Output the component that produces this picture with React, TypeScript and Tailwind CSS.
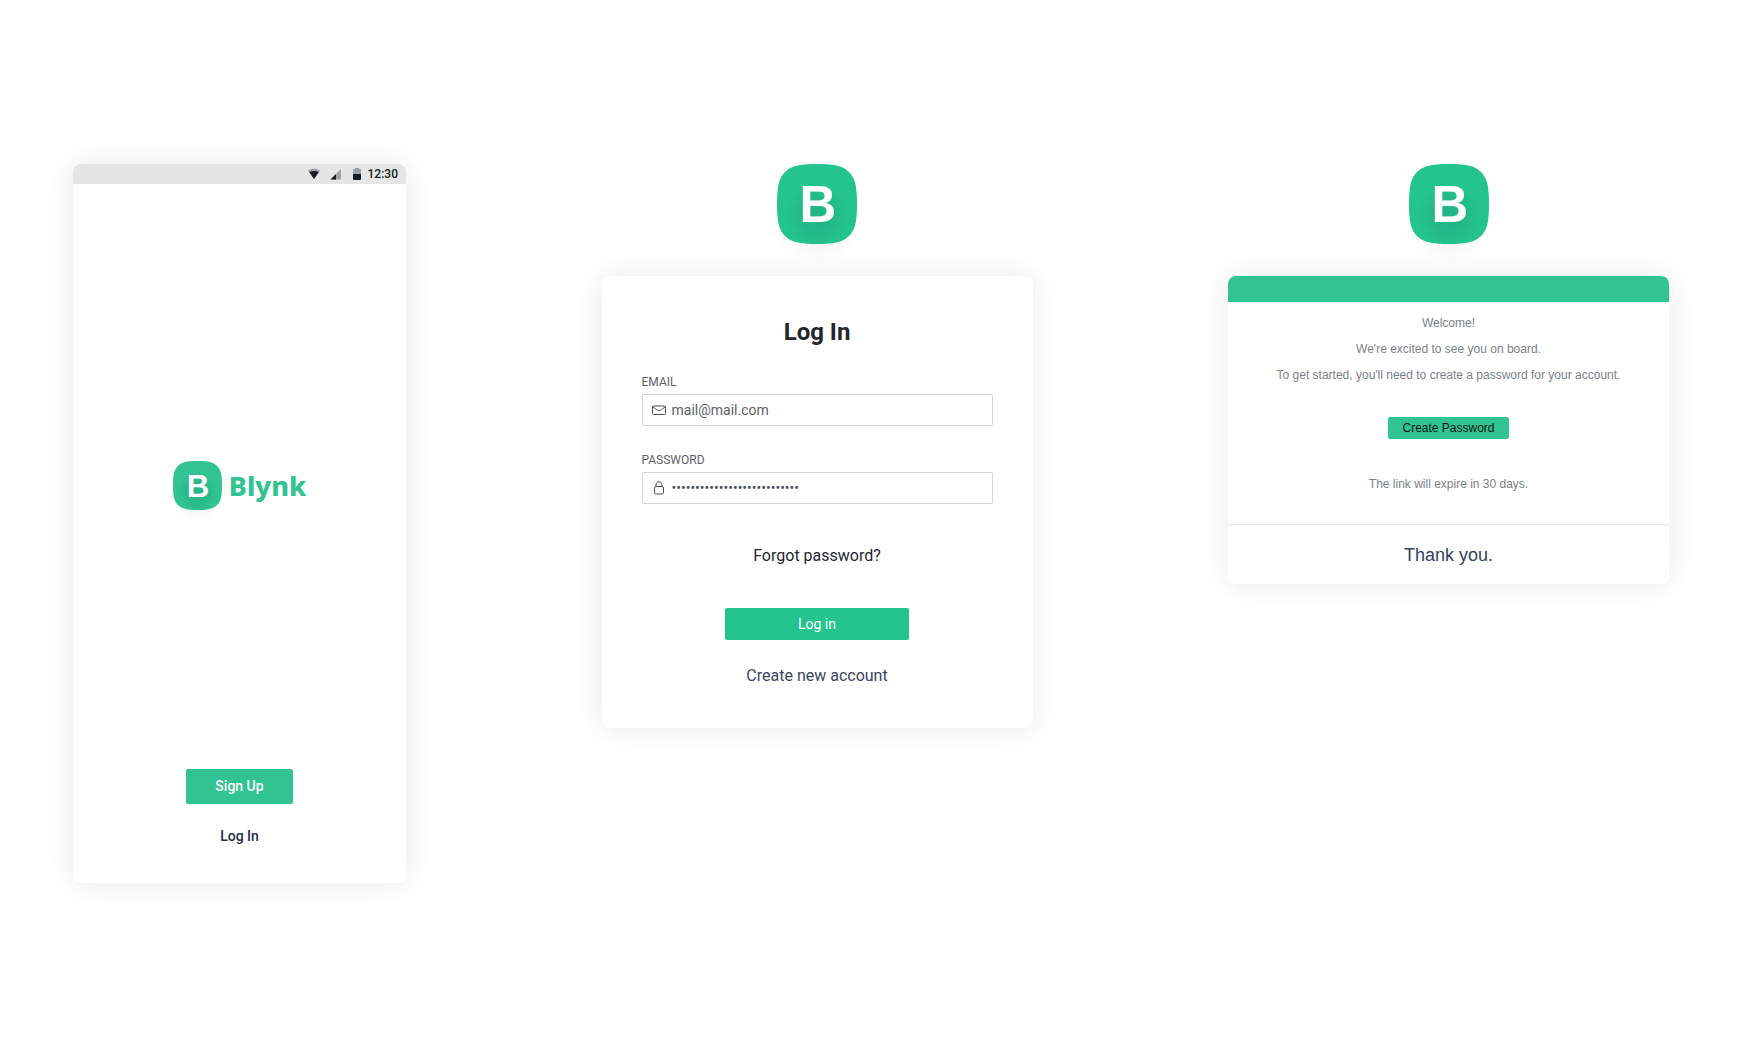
import React, { useState } from "react";

const CARD_SHADOW = "shadow-[0_0_30px_rgba(0,0,0,0.09)]";

function LogoMark({ id, className, fill, title }: { id: string; className: string; fill: string; title: string }) {
  return (
    <svg viewBox="0 0 80 80" role="img" aria-label={title} className={`${className} overflow-visible`}>
      <defs>
        <radialGradient id={id} cx="40" cy="52" r="32" gradientUnits="userSpaceOnUse">
          <stop offset="0" stopColor="#22b083" stopOpacity="0.75" />
          <stop offset="0.5" stopColor="#22b083" stopOpacity="0.55" />
          <stop offset="1" stopColor="#22b083" stopOpacity="0" />
        </radialGradient>
        <radialGradient id={`${id}-drop`}>
          <stop offset="0.4" stopColor="#000" stopOpacity="0.03" />
          <stop offset="1" stopColor="#000" stopOpacity="0" />
        </radialGradient>
      </defs>
      <ellipse cx="40" cy="74" rx="40" ry="24" fill={`url(#${id}-drop)`} />
      <path
        d="M40 0C58 0 66 2 72 8C78 14 80 22 80 40C80 58 78 66 72 72C66 78 58 80 40 80C22 80 14 78 8 72C2 66 0 58 0 40C0 22 2 14 8 8C14 2 22 0 40 0Z"
        fill={fill}
      />
      <path
        d="M40 0C58 0 66 2 72 8C78 14 80 22 80 40C80 58 78 66 72 72C66 78 58 80 40 80C22 80 14 78 8 72C2 66 0 58 0 40C0 22 2 14 8 8C14 2 22 0 40 0Z"
        fill={`url(#${id})`}
      />
      <text x="41" y="58" textAnchor="middle" fill="#fff" fontSize="51" fontWeight="700" fontFamily="'Liberation Sans', Arial, sans-serif">
        B
      </text>
    </svg>
  );
}

function StatusBar() {
  return (
    <div className="flex h-5 items-center justify-end rounded-t-lg bg-[#e5e5e5] pr-2 text-[#151c22]">
      <svg viewBox="0 0 12 12" className="mr-[10px] size-3" aria-hidden="true">
        <path d="M0 2.500C3.300 .2 8.700 .2 12 2.500L6 11Z" fill="#9ca2a7" />
        <path d="M1.200 4.100C4 2.700 8 2.700 10.800 4.100L6 11Z" fill="currentColor" />
      </svg>
      <svg viewBox="0 0 12 12" className="mr-[9px] size-3" aria-hidden="true">
        <path d="M11 1V11.500H.5Z" fill="#9ca2a7" />
        <path d="M6 6V11.500H.5Z" fill="currentColor" />
      </svg>
      <svg viewBox="0 0 12 12" className="mr-[5px] size-3" aria-hidden="true">
        <path d="M4 0H8V1H9Q10 1 10 2V6H2V2Q2 1 3 1H4Z" fill="#9ca2a7" />
        <path d="M2 6H10V11Q10 12 9 12H3Q2 12 2 11Z" fill="currentColor" />
      </svg>
      <span className="text-xs font-medium">12:30</span>
    </div>
  );
}

function PhoneScreen() {
  return (
    <section className={`flex w-full max-w-[333px] flex-1 flex-col rounded-lg bg-white ${CARD_SHADOW}`}>
      <StatusBar />
      <div className="flex flex-col items-center pt-[277px] pb-[37px]">
        <div className="flex items-center gap-[7px]">
          <LogoMark id="mark-small" className="size-[49px]" fill="#31c391" title="Blynk logo" />
          <span className="pt-px font-['Noto_Sans',sans-serif] text-[27px] leading-[48px] font-extrabold text-[#31c391]">Blynk</span>
        </div>
        <button type="button" className="mt-[259px] h-[35px] w-[107px] rounded-[2px] bg-[#31c391] pb-px text-sm font-medium text-white">
          Sign Up
        </button>
        <button type="button" className="mt-[22px] text-sm font-medium leading-5 text-[#282b4a]">
          Log In
        </button>
      </div>
    </section>
  );
}

const FIELD = "flex h-8 items-center gap-[6px] rounded-[2px] border border-[#d3d5d6] bg-white px-[9px] text-[#4b4e58]";

function LoginScreen() {
  const [email, setEmail] = useState("mail@mail.com");
  const [password, setPassword] = useState("abcdefghijklmnopqrstuvwxyz0");
  return (
    <section className="flex w-full max-w-[431px] flex-1 flex-col items-center gap-8">
      <LogoMark id="mark-login" className="size-20" fill="#24c48e" title="Blynk logo" />
      <form
        onSubmit={(e) => e.preventDefault()}
        className={`flex w-full flex-col rounded-lg bg-white px-10 pt-10 pb-10 ${CARD_SHADOW}`}
      >
        <h1 className="text-center text-2xl leading-8 font-bold text-[#24262e]">Log In</h1>
        <label htmlFor="email" className="mt-[25px] mb-[3px] text-xs leading-[18px] text-[#5c5f69]">
          EMAIL
        </label>
        <div className={FIELD}>
          <svg viewBox="0 0 14 14" className="size-[14px] shrink-0" fill="none" stroke="currentColor" aria-hidden="true">
            <rect x="0.500" y="3" width="13" height="8.500" rx="1" />
            <path d="M1 4L4.500 6.600C6 7.700 8 7.700 9.500 6.600L13 4" />
          </svg>
          <input
            id="email"
            type="email"
            value={email}
            onChange={(e) => setEmail(e.target.value)}
            className="w-full min-w-0 bg-transparent text-sm text-[#5c5f69] outline-none"
          />
        </div>
        <label htmlFor="password" className="mt-[25px] mb-[3px] text-xs leading-[18px] text-[#5c5f69]">
          PASSWORD
        </label>
        <div className={FIELD}>
          <svg viewBox="0 0 14 14" className="size-[14px] shrink-0" fill="none" stroke="currentColor" aria-hidden="true">
            <rect x="2.500" y="5.500" width="9" height="7.500" rx="1.500" />
            <path d="M4 5.500V4C4 2 5.200 .7 7 .7S10 2 10 4V5.500" />
          </svg>
          <input
            id="password"
            type="password"
            value={password}
            onChange={(e) => setPassword(e.target.value)}
            className="w-full min-w-0 bg-transparent text-sm text-[#4b4e58] outline-none"
          />
        </div>
        <a href="#forgot" className="mt-10 self-center text-base text-[#24262e]">
          Forgot password?
        </a>
        <button type="submit" className="mt-10 h-8 w-[184px] self-center rounded-[2px] bg-[#24c48e] text-sm text-white">
          Log in
        </button>
        <a href="#create" className="mt-6 self-center text-base text-[#3c4464]">
          Create new account
        </a>
      </form>
    </section>
  );
}

function WelcomeEmail() {
  return (
    <section className="flex w-full max-w-[441px] flex-1 flex-col items-center gap-8 font-['Liberation_Sans',Arial,sans-serif]">
      <LogoMark id="mark-email" className="size-20" fill="#24c48e" title="Blynk logo" />
      <article className={`w-full overflow-hidden rounded-lg bg-white text-center ${CARD_SHADOW}`}>
        <div className="h-[26px] bg-[#31c391]" />
        <div className="flex flex-col items-center px-4 pt-3 pb-[31px] text-xs leading-[18px] text-[#7b8187]">
          <p>Welcome!</p>
          <p className="mt-2">We're excited to see you on board.</p>
          <p className="mt-2">To get started, you'll need to create a password for your account.</p>
          <button type="button" className="mt-[33px] h-[22px] w-[121px] rounded-[2px] bg-[#31c391] text-xs text-[#0b1713]">
            Create Password
          </button>
          <p className="mt-9">The link will expire in 30 days.</p>
        </div>
        <p className="border-t border-[#e3e4e5] pt-4 pb-[15px] text-lg leading-7 text-[#33415c]">Thank you.</p>
      </article>
    </section>
  );
}

export default function App() {
  return (
    <main className="flex min-h-screen flex-col items-center justify-between gap-10 bg-white px-4 py-10 font-[Roboto,sans-serif] lg:flex-row lg:items-start lg:pt-[164px] lg:pr-[74px] lg:pl-[73px]">
      <PhoneScreen />
      <LoginScreen />
      <WelcomeEmail />
    </main>
  );
}
